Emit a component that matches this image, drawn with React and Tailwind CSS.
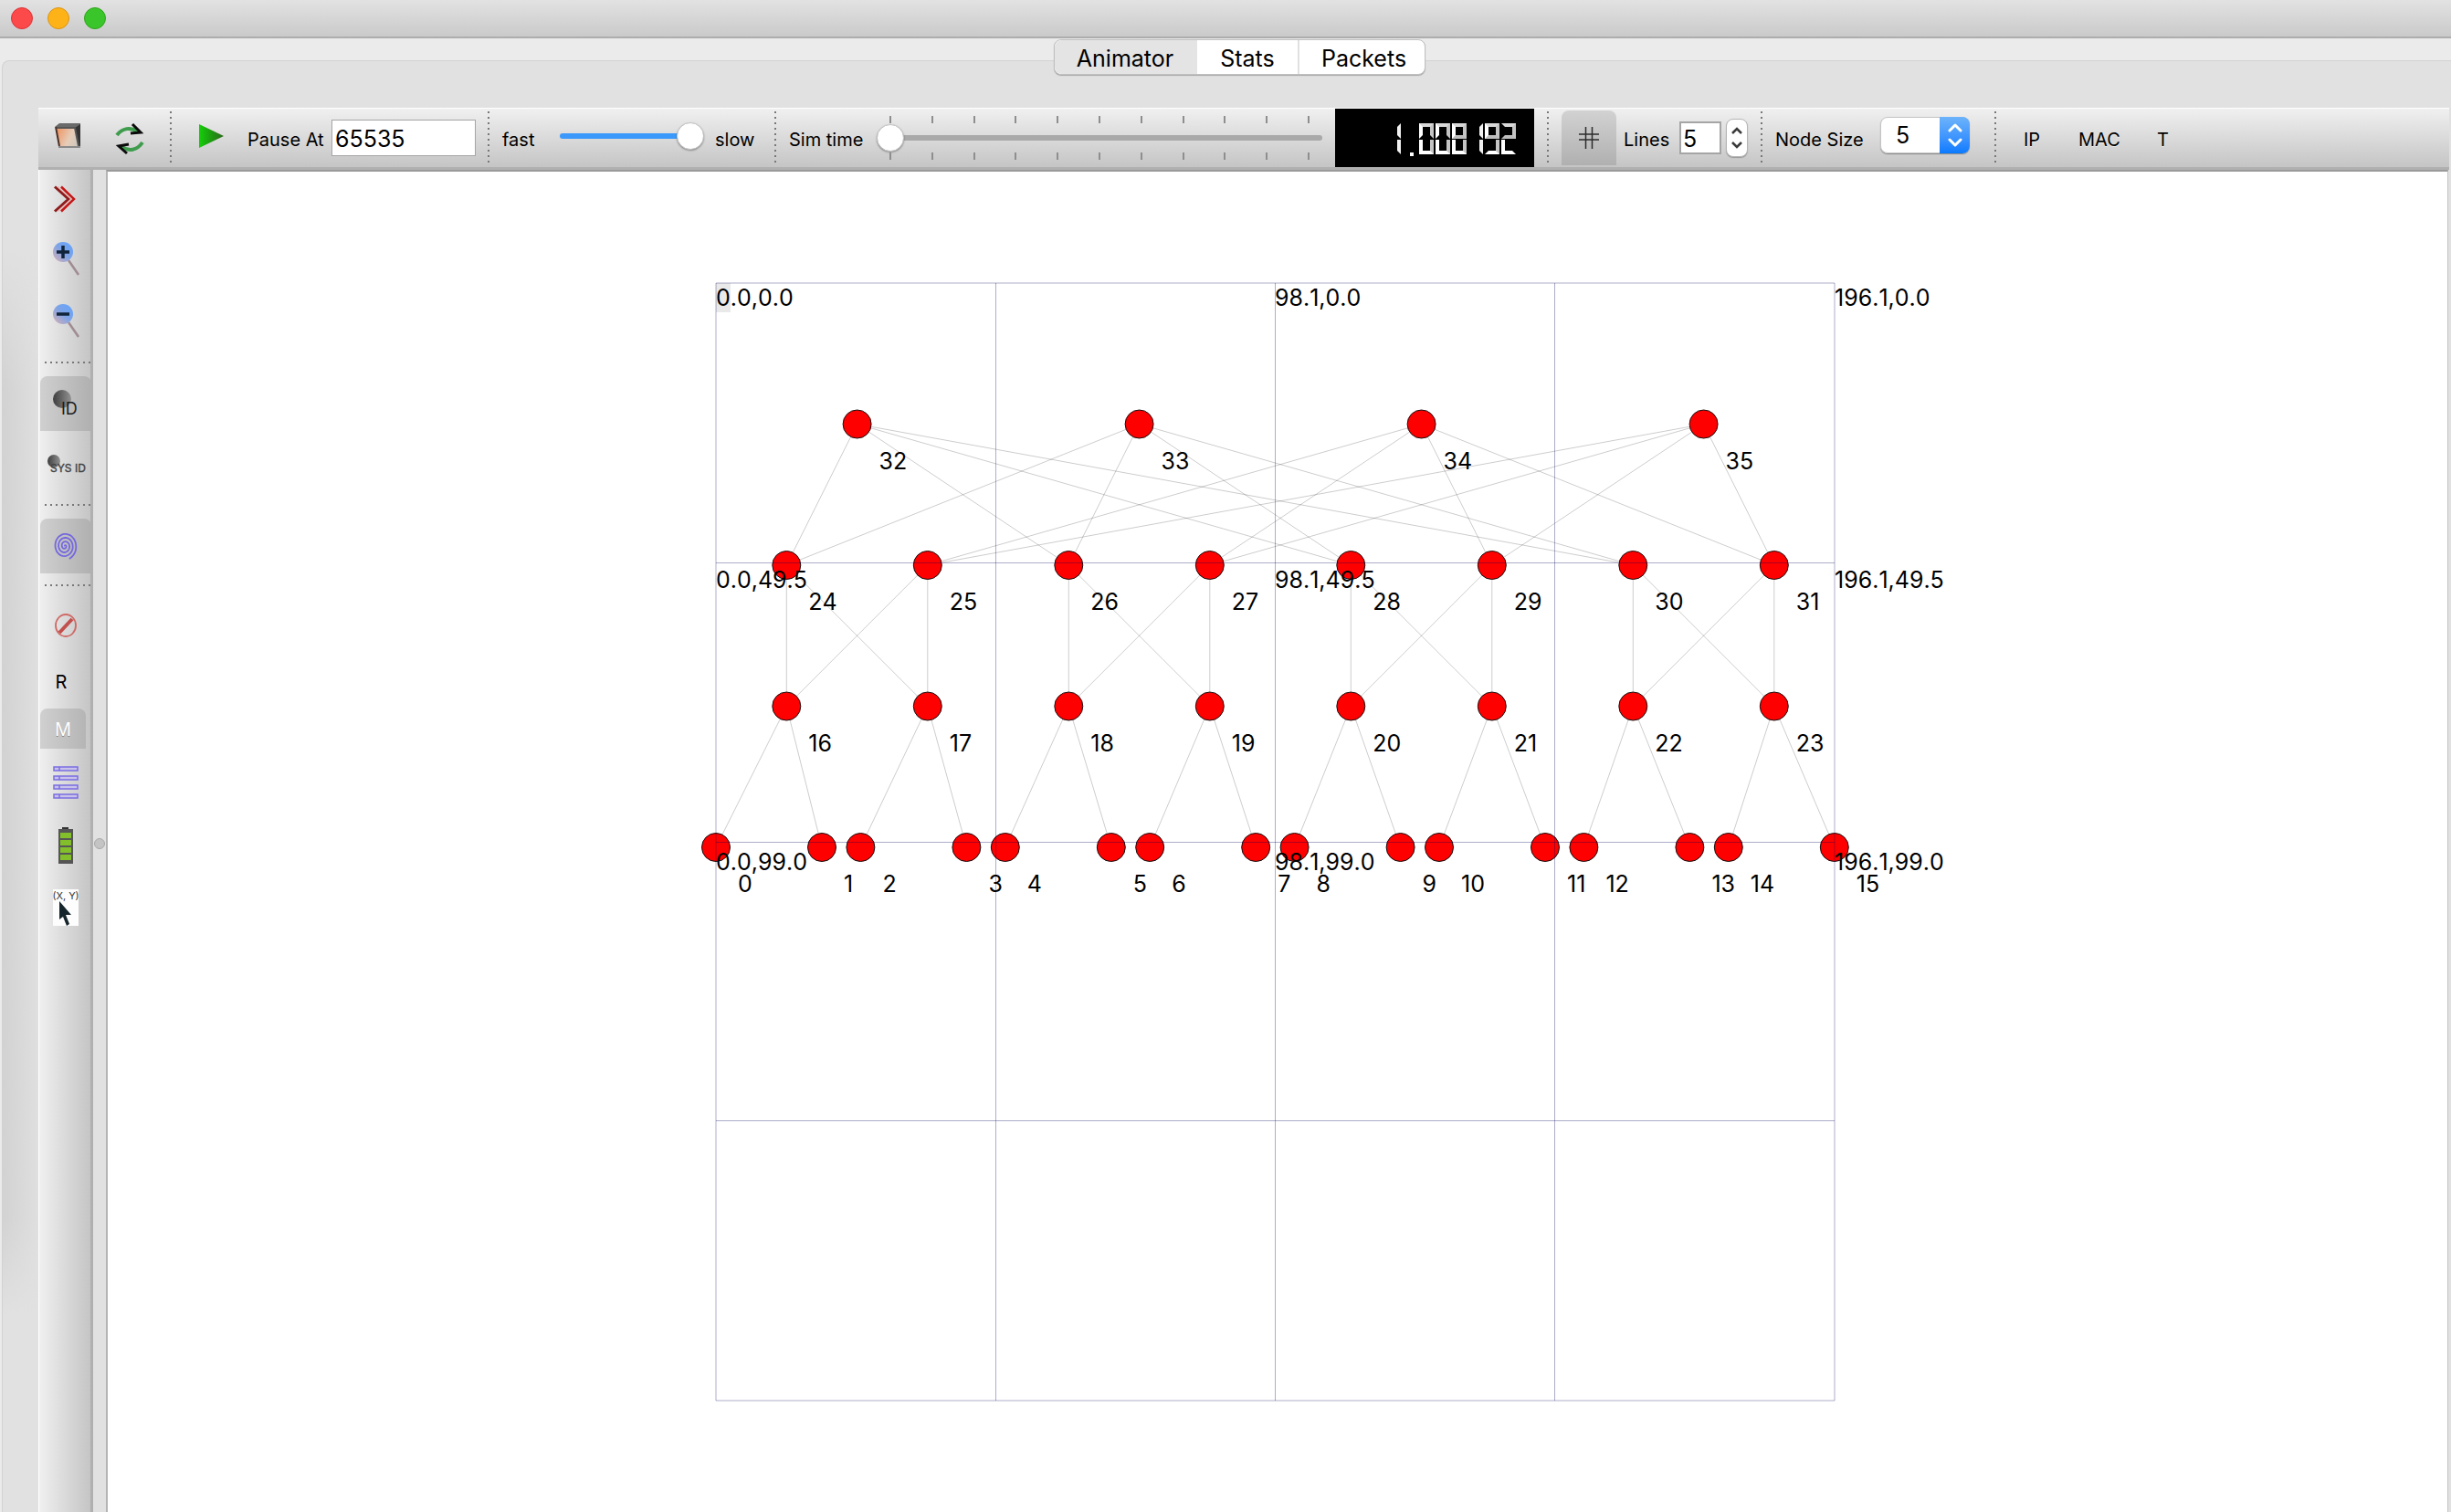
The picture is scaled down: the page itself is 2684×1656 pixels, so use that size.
import React, { useState } from "react";

/* ---------- Topology ---------- */

const nodes = [];
for (let i = 0; i < 16; i++) {
  const x = Math.floor(i / 2) * 158.4 + (i % 2) * 116;
  nodes.push({ id: i, x, y: 618 });
}
for (let i = 0; i < 8; i++) nodes.push({ id: 16 + i, x: 77.3 + i * 154.5, y: 463.5 });
for (let i = 0; i < 8; i++) nodes.push({ id: 24 + i, x: 77.3 + i * 154.5, y: 309 });
for (let i = 0; i < 4; i++) nodes.push({ id: 32 + i, x: 154.6 + i * 309, y: 154.5 });

const links = [];
for (let i = 0; i < 8; i++) {
  links.push([16 + i, 2 * i], [16 + i, 2 * i + 1]);
}
for (let p = 0; p < 4; p++) {
  for (const up of [24, 25]) for (const down of [16, 17]) links.push([up + 2 * p, down + 2 * p]);
}
for (let p = 0; p < 4; p++) {
  links.push([32, 24 + 2 * p], [33, 24 + 2 * p], [34, 25 + 2 * p], [35, 25 + 2 * p]);
}

const gridStops = [0, 306.5, 612.5, 918.5, 1225];
const rowStops = [0, 306.5, 612.5, 917.5, 1224];
const coordCols = [
  ["0.0", 0],
  ["98.1", 612],
  ["196.1", 1225],
];
const coordRows = [
  ["0.0", 25],
  ["49.5", 334],
  ["99.0", 643],
];

function Topology() {
  return (
    <svg
      width="1225"
      height="1224"
      viewBox="0 0 1225 1224"
      className="shrink-0 overflow-visible"
      role="img"
      aria-label="Network topology"
    >
      <g stroke="#000" strokeOpacity="0.2" strokeWidth="1">
        {links.map(([a, b]) => (
          <line key={a + "-" + b} x1={nodes[a].x} y1={nodes[a].y} x2={nodes[b].x} y2={nodes[b].y} />
        ))}
      </g>
      <g fill="#ff0000" stroke="#111" strokeWidth="1">
        {nodes.map((n) => (
          <circle key={n.id} cx={n.x} cy={n.y} r="15.5" />
        ))}
      </g>
      <rect x="0" y="0" width="16" height="32" fill="#e9e9e9" />
      <g stroke="#00005a" strokeOpacity="0.32" strokeWidth="1">
        {gridStops.map((x) => (
          <line key={"v" + x} x1={x} y1="0" x2={x} y2="1224" />
        ))}
        {rowStops.map((y) => (
          <line key={"h" + y} x1="0" y1={y} x2="1225" y2={y} />
        ))}
      </g>
      <g fill="#000" className="text-[25px] [font-kerning:none]">
        {nodes.map((n) => (
          <text key={n.id} x={n.x + 24} y={n.y + 49}>
            {n.id}
          </text>
        ))}
        {coordRows.map(([ry, y]) =>
          coordCols.map(([cx, x]) => (
            <text key={cx + ry} x={x} y={y}>
              {cx + "," + ry}
            </text>
          )),
        )}
      </g>
    </svg>
  );
}

/* ---------- Seven-segment display ---------- */

/* Each half of a digit is a box whose lit segments are its borders. */
const halves = {
  0: ["border-t-[#d8d8d8] border-l-white border-r-[#c4c4c4]", "border-l-white border-r-[#c4c4c4] border-b-white"],
  2: ["border-t-[#d8d8d8] border-r-[#c4c4c4] border-b-[#bdbdbd]", "border-l-white border-b-white"],
  8: ["border-t-[#d8d8d8] border-l-white border-r-[#c4c4c4] border-b-[#bdbdbd]", "border-l-white border-r-[#c4c4c4] border-b-white"],
  9: ["border-t-[#d8d8d8] border-l-white border-r-[#c4c4c4] border-b-[#bdbdbd]", "border-r-[#c4c4c4] border-b-white"],
  1: ["border-r-[#f0f0f0]", "border-r-[#f0f0f0]"],
};

function Segments({ value }) {
  return (
    <output aria-label={value} className="flex h-16 w-[218px] shrink-0 items-center justify-end gap-[2px] bg-black pt-[2px] pr-5">
      {value.split("").map((c, i) =>
        c === "." ? (
          <span key={i} className="mr-1 mb-3 ml-2 h-1 w-1 self-end bg-white" />
        ) : (
          <span key={i} className="flex w-4 flex-col">
            <span className={"h-[17px] border-4 border-transparent " + halves[c][0]} />
            <span className={"mt-[1px] h-4 border-4 border-t-0 border-transparent " + halves[c][1]} />
          </span>
        ),
      )}
    </output>
  );
}

/* ---------- Icons ---------- */

function Icon({ children, w = 28, h = 28 }) {
  return (
    <svg width={w} height={h} viewBox={`0 0 ${w} ${h}`} fill="none" aria-hidden="true" className="shrink-0 overflow-visible">
      {children}
    </svg>
  );
}

const FolderIcon = () => (
  <Icon>
    <defs>
      <linearGradient id="folder" x1="0" y1="0.3" x2="1" y2="0.7">
        <stop offset="0" stopColor="#ee9a6c" />
        <stop offset="0.6" stopColor="#e6cdb8" />
        <stop offset="1" stopColor="#cfc8bd" />
      </linearGradient>
    </defs>
    <path d="M0 4 L5 0 H28 V25 L24 26 L22 6 Z" fill="#6a6a6a" />
    <path d="M22 5 L28 1 V25 L25 24 Z" fill="#333" />
    <path d="M2 5 H22 L26 25 H5 Z" fill="url(#folder)" />
    <path d="M1 5 H22 L26 25" stroke="#555" strokeWidth="2" />
    <path d="M1 4 L5 25" stroke="#4a3026" strokeWidth="2" />
    <path d="M4 26 H28" stroke="#8a8a8a" strokeWidth="2" />
  </Icon>
);

const ReloadIcon = () => (
  <Icon h={34}>
    <path d="M0 13 C6 5 15 4 23 9" stroke="#3f9c4d" strokeWidth="4" />
    <path d="M28 21 C22 30 13 31 5 26" stroke="#3f9c4d" strokeWidth="4" />
    <path d="M17 1 L26 10 L15 11" stroke="#0b0b0b" strokeWidth="3" />
    <path d="M11 33 L2 25 L13 23" stroke="#0b0b0b" strokeWidth="3" />
  </Icon>
);

const PlayIcon = () => (
  <Icon>
    <defs>
      <linearGradient id="play" x1="0" y1="0" x2="1" y2="0">
        <stop offset="0" stopColor="#16cf0b" />
        <stop offset="0.5" stopColor="#1d9a10" />
        <stop offset="1" stopColor="#2c6a1c" />
      </linearGradient>
    </defs>
    <path d="M1 0 L28 13 L1 26 Z" fill="url(#play)" />
  </Icon>
);

const HashIcon = () => (
  <Icon w={24} h={24}>
    <path d="M8.500 0 V24 M15.500 0 V24 M1 8 H23 M1 14 H23" stroke="#2c2c2c" strokeWidth="1.500" />
  </Icon>
);

const DoubleChevronIcon = () => (
  <Icon w={28} h={30}>
    <path d="M2 1.500 L17 15 L2 28.500" stroke="#8e1c1c" strokeWidth="3" />
    <path d="M9 1.500 L23 15 L9 28.500" stroke="#c51616" strokeWidth="2.500" />
    <path d="M5.500 1.500 L20 15 L5.500 28.500" stroke="#e6b9b5" strokeWidth="1.200" />
  </Icon>
);

const ZoomIcon = ({ plus }) => (
  <Icon h={40}>
    <defs>
      <linearGradient id="lens" x1="1" y1="0" x2="0.1" y2="0.9">
        <stop offset="0" stopColor="#5fa4ff" />
        <stop offset="0.55" stopColor="#7fa3e6" />
        <stop offset="1" stopColor="#c9aebb" />
      </linearGradient>
    </defs>
    <path d="M17 21 L28 37" stroke="#a08c92" strokeWidth="2.500" />
    <circle cx="11" cy="12" r="11" fill="url(#lens)" />
    <path d={plus ? "M4 12 H18 M11 5 V19" : "M4 12 H18"} stroke="#10243a" strokeWidth="3.500" />
  </Icon>
);

const IdIcon = () => (
  <Icon>
    <defs>
      <linearGradient id="ball" x1="0" y1="0" x2="1" y2="0">
        <stop offset="0" stopColor="#3e3e3e" />
        <stop offset="1" stopColor="#929292" />
      </linearGradient>
    </defs>
    <circle cx="10" cy="9" r="10" fill="url(#ball)" />
    <text x="9" y="26" fontSize="18" fill="#1c1c1c">
      ID
    </text>
  </Icon>
);

const SysIdIcon = () => (
  <Icon w={40} h={24}>
    <circle cx="7" cy="9" r="7" fill="url(#ball)" />
    <text x="3" y="21" fontSize="12" fill="#444" stroke="#444" strokeWidth="0.400">
      SYS ID
    </text>
  </Icon>
);

const spiral = Array.from({ length: 121 }, (_, i) => {
  const t = i / 120;
  const a = t * Math.PI * 2 * 3.6 + 3.7;
  return `${(13 + t * 13 * Math.cos(a)).toFixed(1)},${(15 + t * 15 * Math.sin(a)).toFixed(1)}`;
}).join(" ");

const SpiralIcon = () => (
  <Icon h={30}>
    <polyline points={spiral} stroke="#7468de" strokeWidth="1.800" />
  </Icon>
);

const ForbidIcon = () => (
  <Icon>
    <ellipse cx="14" cy="13" rx="11" ry="12" stroke="#cf6a66" strokeWidth="1.800" />
    <path d="M7 21 L21 6" stroke="#c2504d" strokeWidth="4" />
  </Icon>
);

const RowsIcon = () => (
  <Icon h={38}>
    {[2, 12, 22, 32].map((y) => (
      <g key={y}>
        <rect x="1" y={y} width="26" height="4" fill="#c9c3ea" stroke="#7a6ee2" strokeWidth="1.500" />
        <path d={`M7 ${y} V${y + 4}`} stroke="#7a6ee2" strokeWidth="1.500" />
      </g>
    ))}
  </Icon>
);

const BatteryIcon = () => (
  <Icon h={40}>
    <rect x="10" y="0" width="7" height="4" fill="#333" />
    <rect x="6" y="2" width="16" height="38" fill="#555" />
    {[6, 14, 22, 30].map((y) => (
      <rect key={y} x="8" y={y} width="12" height="6" fill="#82bf2b" />
    ))}
  </Icon>
);

const CursorIcon = () => (
  <Icon h={40}>
    <rect width="28" height="40" fill="#fdfdfd" />
    <text x="14" y="11" fontSize="11" fill="#333" textAnchor="middle">
      (X, Y)
    </text>
    <path d="M7 13 L7 33 L11 30 L15 40 L18 38 L14 28 L20 28 Z" fill="#14262b" />
  </Icon>
);

/* ---------- Toolbar pieces ---------- */

const VDots = ({ className = "" }) => (
  <div
    className={
      "mt-[3px] h-[56px] w-[2px] shrink-0 self-start bg-[repeating-linear-gradient(to_bottom,#777_0_2px,transparent_2px_6px)] " +
      className
    }
  />
);

const HDots = () => (
  <div className="flex h-7 items-center pl-[5px]">
    <div className="-mt-[2px] h-[2px] w-[51px] bg-[repeating-linear-gradient(to_right,#777_0_2px,transparent_2px_6px)]" />
  </div>
);

const SideButton = ({ label, active, className = "h-15", children }) => (
  <button
    type="button"
    aria-label={label}
    aria-pressed={active}
    className={
      "flex w-14 shrink-0 items-center justify-center " +
      (active ? "rounded-t-lg bg-gradient-to-r from-[#d0d0d0] to-[#b0b0b0] " : "") +
      className
    }
  >
    {children}
  </button>
);

const thumb =
  "[&::-webkit-slider-thumb]:appearance-none [&::-webkit-slider-thumb]:size-[30px] [&::-webkit-slider-thumb]:rounded-full [&::-webkit-slider-thumb]:bg-white [&::-webkit-slider-thumb]:border [&::-webkit-slider-thumb]:border-[#c2c2c2] [&::-webkit-slider-thumb]:shadow-[0_1px_2px_rgba(0,0,0,0.35)] [&::-webkit-slider-thumb]:-mt-3";

const Ticks = () => (
  <div className="flex justify-between px-[14px]">
    {Array.from({ length: 11 }, (_, i) => (
      <span key={i} className="h-2 w-[2px] bg-[#8e8e8e]" />
    ))}
  </div>
);

function TopToolbar() {
  const [pauseAt, setPauseAt] = useState("65535");
  const [speed, setSpeed] = useState(100);
  const [time, setTime] = useState(0);
  const [lines, setLines] = useState(5);
  const [size, setSize] = useState("5");
  return (
    <div className="mr-[2px] flex h-[68px] shrink-0 items-center border-t border-b-[3px] border-t-white border-b-[#b0b0b0] bg-gradient-to-b from-[#f0f0f0] to-[#c5c5c5] text-[20px] leading-6 whitespace-nowrap">
      <button type="button" aria-label="Open" className="mr-10 ml-[18px] pb-1">
        <FolderIcon />
      </button>
      <button type="button" aria-label="Reload" className="pt-[2px]">
        <ReloadIcon />
      </button>
      <VDots className="ml-[30px]" />
      <button type="button" aria-label="Play" className="mr-[26px] ml-[29px] pb-[2px]">
        <PlayIcon />
      </button>
      <label htmlFor="pause" className="w-[92px] pt-1">
        Pause At
      </label>
      <input
        id="pause"
        value={pauseAt}
        onChange={(e) => setPauseAt(e.target.value)}
        className="h-10 w-[158px] border border-[#a5a5a5] bg-white pt-[2px] pl-[3px] text-[25px] outline-none [font-kerning:none]"
      />
      <VDots className="ml-[13px]" />
      <label htmlFor="speed" className="ml-[14px] w-[63px] pt-1">
        fast
      </label>
      <input
        id="speed"
        type="range"
        value={speed}
        onChange={(e) => setSpeed(Number(e.target.value))}
        className={
          "-mt-1 h-8 w-[158px] appearance-none bg-transparent [&::-webkit-slider-runnable-track]:h-[6px] [&::-webkit-slider-runnable-track]:rounded-full [&::-webkit-slider-runnable-track]:bg-[#3b99fc] " +
          thumb
        }
      />
      <span className="ml-3 w-[65px] pt-1">slow</span>
      <VDots />
      <label htmlFor="simtime" className="ml-[14px] w-24 pt-1">
        Sim time
      </label>
      <div className="flex w-[488px] flex-col">
        <Ticks />
        <input
          id="simtime"
          type="range"
          value={time}
          onChange={(e) => setTime(Number(e.target.value))}
          className={
            "h-8 w-full appearance-none bg-transparent [&::-webkit-slider-runnable-track]:h-[6px] [&::-webkit-slider-runnable-track]:rounded-full [&::-webkit-slider-runnable-track]:bg-[#a9a9a9] " +
            thumb
          }
        />
        <Ticks />
      </div>
      <div className="ml-[14px]">
        <Segments value="1.008192" />
      </div>
      <VDots className="ml-[14px]" />
      <button
        type="button"
        aria-label="Grid"
        aria-pressed="true"
        className="ml-[14px] flex h-15 w-15 items-center justify-center rounded-t-lg bg-gradient-to-b from-[#d2d2d2] to-[#b0b0b0]"
      >
        <HashIcon />
      </button>
      <label htmlFor="lines" className="ml-2 w-[61px] pt-1">
        Lines
      </label>
      <input
        id="lines"
        value={lines}
        onChange={(e) => setLines(Number(e.target.value) || 0)}
        className="h-9 w-[46px] border-2 border-[#a5a5a5] bg-white pt-[2px] pl-[2px] text-[25px] outline-none"
      />
      <div className="ml-[5px] flex h-[42px] w-6 flex-col rounded-lg border border-[#b5b5b5] bg-white shadow-[0_1px_1px_rgba(0,0,0,0.25)]">
        <button type="button" aria-label="More lines" onClick={() => setLines(lines + 1)} className="flex flex-1 items-center justify-center pt-1">
          <svg width="12" height="8" viewBox="0 0 12 8" fill="none" stroke="#3a3a3a" strokeWidth="2.500">
            <path d="M1 7 L6 2 L11 7" />
          </svg>
        </button>
        <button type="button" aria-label="Fewer lines" onClick={() => setLines(lines - 1)} className="flex flex-1 items-center justify-center pb-1">
          <svg width="12" height="8" viewBox="0 0 12 8" fill="none" stroke="#3a3a3a" strokeWidth="2.500">
            <path d="M1 1 L6 6 L11 1" />
          </svg>
        </button>
      </div>
      <VDots className="ml-[14px]" />
      <label htmlFor="size" className="ml-[14px] w-[115px] pt-1">
        Node Size
      </label>
      <div className="relative -mt-[6px] flex h-10 w-[98px] rounded-lg shadow-[0_1px_1px_rgba(0,0,0,0.35)]">
        <select
          id="size"
          value={size}
          onChange={(e) => setSize(e.target.value)}
          className="h-10 w-full appearance-none rounded-lg border border-[#c4c4c4] bg-white pl-4 text-[25px] leading-8 outline-none"
        >
          <option>1</option>
          <option>5</option>
          <option>10</option>
        </select>
        <span className="pointer-events-none absolute top-0 right-0 flex h-10 w-[33px] items-center justify-center rounded-r-lg bg-gradient-to-b from-[#6cb3fa] to-[#067aff]">
          <svg width="16" height="26" viewBox="0 0 16 26" fill="none" stroke="#fff" strokeWidth="3" strokeLinecap="round" strokeLinejoin="round">
            <path d="M2 8 L8 2 L14 8 M2 18 L8 24 L14 18" />
          </svg>
        </span>
      </div>
      <VDots className="ml-[27px]" />
      <button type="button" className="ml-[30px] w-[60px] pt-1 text-left [text-shadow:0_1px_0_#eee]">
        IP
      </button>
      <button type="button" className="w-[86px] pt-1 text-left [text-shadow:0_1px_0_#eee]">
        MAC
      </button>
      <button type="button" className="pt-1 text-left [text-shadow:0_1px_0_#eee]">
        T
      </button>
    </div>
  );
}

function SideToolbar() {
  return (
    <div className="flex w-[60px] shrink-0 flex-col border-r-[3px] border-l border-r-[#b0b0b0] border-l-white bg-gradient-to-r from-[#f0f0f0] to-[#c5c5c5] pl-[1px] text-[20px]">
      <SideButton label="Expand" className="h-[62px] pt-[2px]">
        <DoubleChevronIcon />
      </SideButton>
      <SideButton label="Zoom in" className="h-[68px] pt-[3px]">
        <ZoomIcon plus />
      </SideButton>
      <SideButton label="Zoom out" className="h-[68px] pt-[3px]">
        <ZoomIcon />
      </SideButton>
      <HDots />
      <SideButton label="Show node ID" active>
        <IdIcon />
      </SideButton>
      <SideButton label="Show system ID" className="h-[68px] pt-1">
        <SysIdIcon />
      </SideButton>
      <HDots />
      <SideButton label="Animate links" active>
        <SpiralIcon />
      </SideButton>
      <HDots />
      <SideButton label="Block packets" className="h-15">
        <ForbidIcon />
      </SideButton>
      <button type="button" className="h-15 w-[46px] pt-[2px]">
        R
      </button>
      <button
        type="button"
        aria-pressed="true"
        className="h-11 w-[50px] rounded-t-lg bg-gradient-to-r from-[#d0d0d0] to-[#b5b5b5] pt-[2px] text-white [text-shadow:0_1px_0_#888]"
      >
        M
      </button>
      <SideButton label="Packet rows" className="h-[74px]">
        <RowsIcon />
      </SideButton>
      <SideButton label="Battery" className="h-16">
        <BatteryIcon />
      </SideButton>
      <SideButton label="Mouse position" className="h-[72px]">
        <CursorIcon />
      </SideButton>
    </div>
  );
}

export default function App() {
  const tabs = ["Animator", "Stats", "Packets"];
  const [tab, setTab] = useState("Animator");
  return (
    <div className="flex min-h-screen flex-col bg-[#ebebeb] font-['Inter',sans-serif] text-black">
      <header className="flex h-[42px] shrink-0 items-center gap-4 border-b-2 border-[#adadad] bg-gradient-to-b from-[#e2e2e2] to-[#cacaca] pl-3">
        <button type="button" aria-label="Close" className="size-6 rounded-full border border-[#dd3236] bg-[#fc4a4a]" />
        <button type="button" aria-label="Minimize" className="size-6 rounded-full border border-[#dc9312] bg-[#fdb318]" />
        <button type="button" aria-label="Zoom" className="size-6 rounded-full border border-[#30a31c] bg-[#3ac62a]" />
      </header>

      <main className="mt-6 ml-[2px] flex flex-1 flex-col rounded-tl-lg border-t border-l border-[#d2d2d2] bg-[#e1e1e1]">
        <div
          role="tablist"
          className="relative -mt-6 ml-7 flex h-[39px] self-center rounded-lg border border-[#c0c0c0] bg-white text-[25px] leading-9 shadow-[0_1px_1px_rgba(0,0,0,0.25)]"
        >
          {tabs.map((t) => (
            <button
              key={t}
              type="button"
              role="tab"
              aria-selected={t === tab}
              onClick={() => setTab(t)}
              className={
                t === "Animator"
                  ? "w-[156px] rounded-l-lg bg-[#e4e4e4] pt-[2px] pr-[2px]"
                  : t === "Stats"
                    ? "w-[110px] pt-[2px]"
                    : "w-[139px] border-l-2 border-[#e0e0e0] pt-[2px] pl-1"
              }
            >
              {t}
            </button>
          ))}
        </div>

        <div className="mt-9 flex flex-1">
          <div className="w-[39px] shrink-0 bg-[linear-gradient(to_bottom,#e1e1e1_10%,transparent_20%,transparent_79%,#e1e1e1_86%),linear-gradient(to_right,#d2d2d2,#dfdfdf)]" />
          <div className="flex flex-1 flex-col">
            <TopToolbar />
            <div className="flex flex-1">
              <SideToolbar />
              <div className="flex w-[14px] shrink-0 flex-col items-center pt-[732px]">
                <span className="size-3 rounded-full border border-[#a8a8a8] bg-[#c4c4c4]" />
              </div>
              <section className="mr-[3px] flex flex-1 items-center justify-center border-t-2 border-r border-l-2 border-t-[#9a9a9a] border-r-[#c4c4c4] border-l-[#b4b4b4] bg-white pr-[6px]">
                <Topology />
              </section>
            </div>
          </div>
        </div>
      </main>
    </div>
  );
}
